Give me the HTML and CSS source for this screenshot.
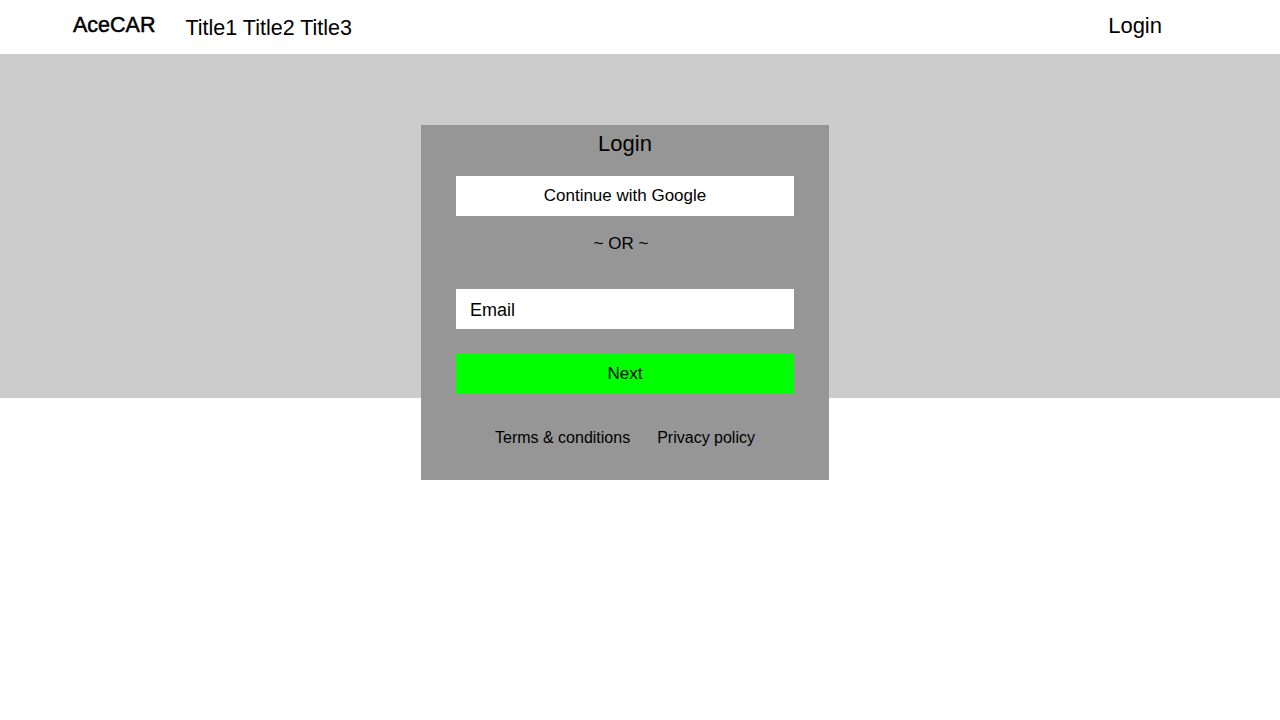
FILE: index.html
```html
<!DOCTYPE html>
<html lang="en">
<head>
<meta charset="utf-8">
<title>AceCAR</title>
<link rel="stylesheet" href="styles.css">
</head>
<body>
<header class="topbar">
  <div class="brand">AceCAR</div>
  <nav class="nav">Title1 Title2 Title3</nav>
  <div class="login-link">Login</div>
</header>
<main class="hero">
  <section class="card">
    <h1 class="card-title">Login</h1>
    <button class="google-btn">Continue with Google</button>
    <div class="or">~ OR ~</div>
    <div class="email-field">Email</div>
    <button class="next-btn">Next</button>
    <div class="links">
      <span>Terms &amp; conditions</span>
      <span>Privacy policy</span>
    </div>
  </section>
</main>
</body>
</html>
```
FILE: styles.css
```css
html, body {
  margin: 0;
  padding: 0;
  background: #ffffff;
  font-family: "Liberation Sans", Arial, sans-serif;
  color: #000;
}
.topbar {
  height: 54px;
  display: flex;
  align-items: center;
  padding-left: 73px;
  padding-right: 118px;
  box-sizing: border-box;
}
.brand {
  font-size: 21.5px;
  -webkit-text-stroke: 0.5px #000;
  margin-top: -3px;
}
.nav {
  font-size: 21.5px;
  margin-left: 30px;
  margin-top: 3px;
}
.login-link {
  font-size: 22px;
  margin-left: auto;
  margin-top: -2px;
}
.hero {
  padding-top: 71px;
  background: linear-gradient(#cccccc 0, #cccccc 344px, #ffffff 344px);
  min-height: 666px;
  box-sizing: border-box;
}
.card {
  margin-left: 421px;
  width: 408px;
  box-sizing: border-box;
  padding: 0 35px 32px;
  background: #969696;
  display: flex;
  flex-direction: column;
}
.card-title {
  margin: 0;
  font-size: 22px;
  font-weight: normal;
  line-height: 38px;
  text-align: center;
}
.google-btn, .next-btn {
  border: none;
  height: 40px;
  font-family: inherit;
  color: #000;
  padding: 0;
}
.google-btn {
  margin-top: 13px;
  background: #ffffff;
  font-size: 17px;
}
.or {
  margin-top: 16px;
  line-height: 24px;
  font-size: 17px;
  text-align: center;
  padding-right: 8px;
}
.email-field {
  margin-top: 33px;
  height: 40px;
  background: #fff;
  display: flex;
  align-items: center;
  padding-left: 14px;
  padding-top: 2px;
  box-sizing: border-box;
  font-size: 18px;
}
.next-btn {
  margin-top: 25px;
  background: #00ff00;
  font-size: 17px;
}
.links {
  margin-top: 34px;
  line-height: 20px;
  font-size: 16px;
  display: flex;
  justify-content: center;
  gap: 27px;
}
```
